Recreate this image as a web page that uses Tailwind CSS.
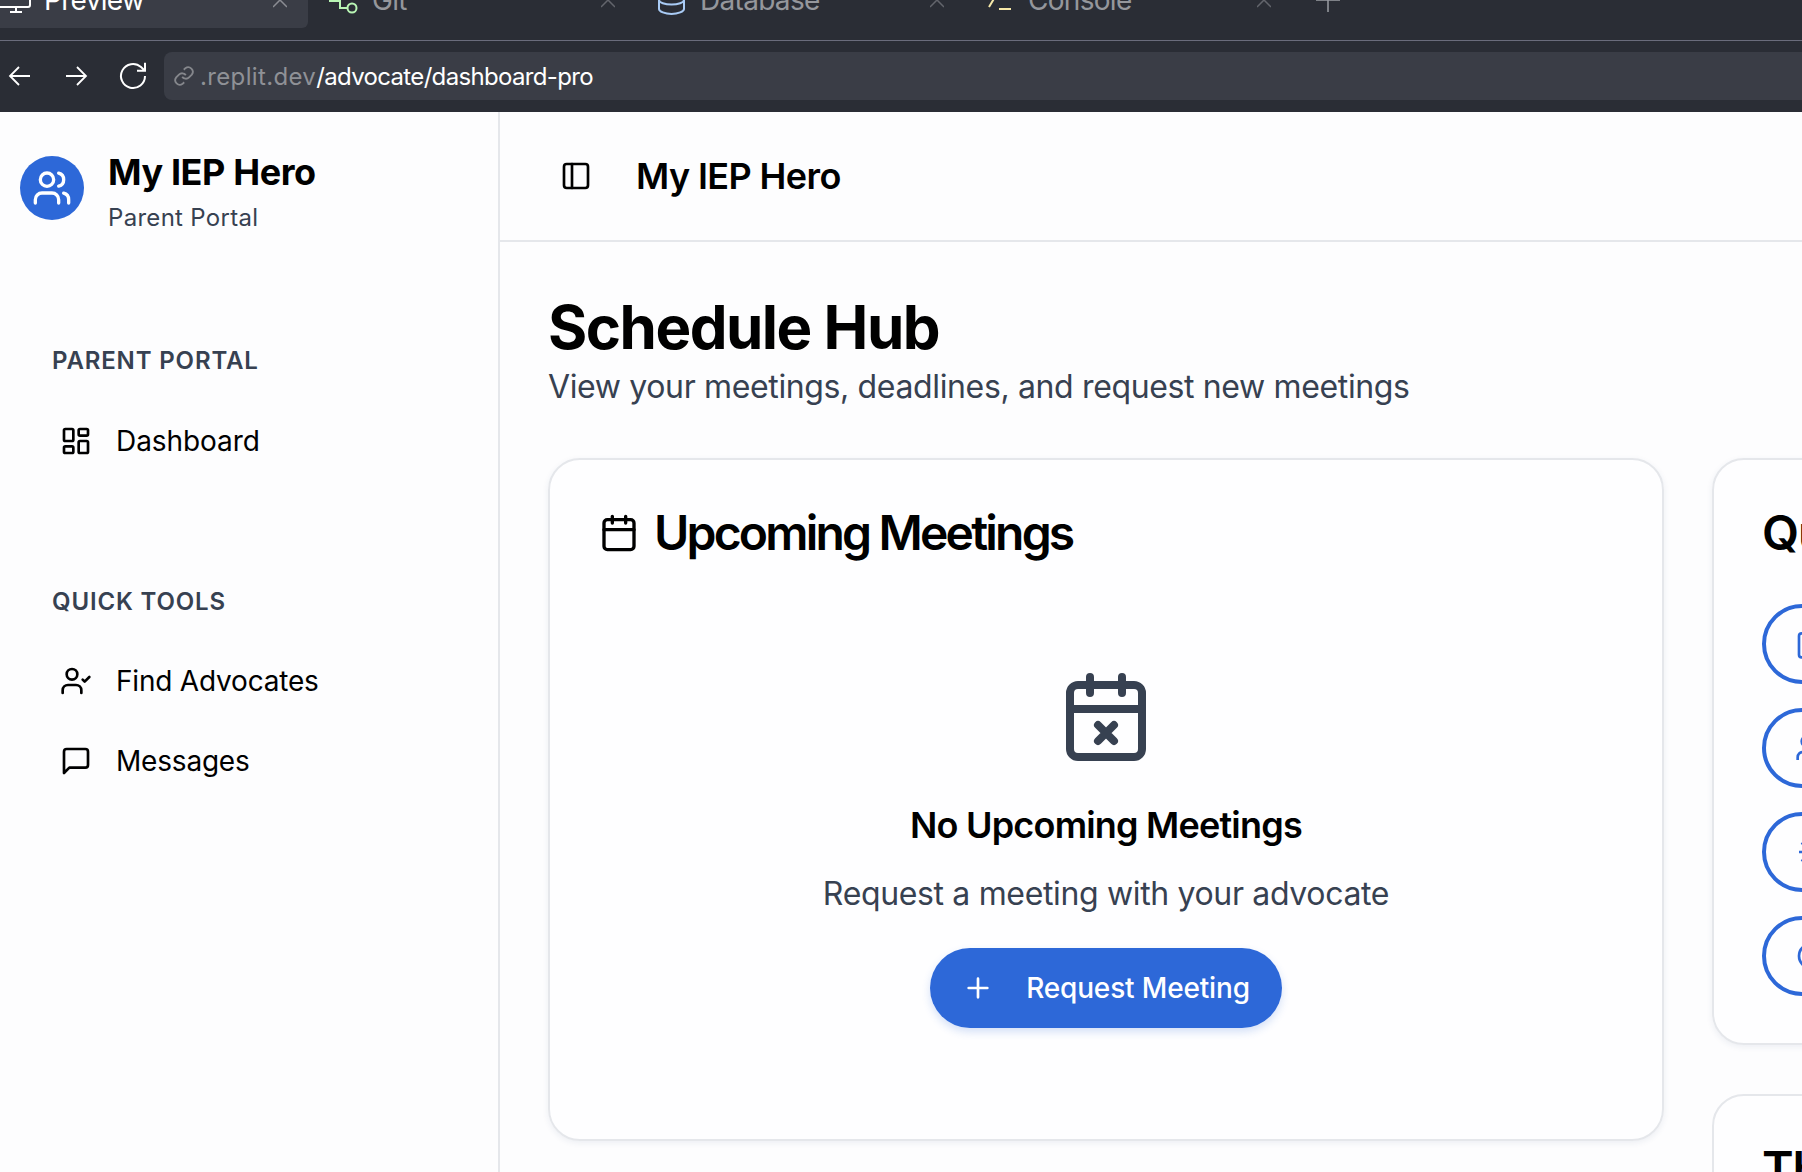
<!DOCTYPE html>
<html><head><meta charset="utf-8">
<script src="https://cdn.jsdelivr.net/npm/@tailwindcss/browser@4"></script>
<title>Schedule Hub</title></head>
<body class="m-0 h-[1172px] w-[1802px] overflow-hidden bg-[#fdfdfe] font-['Inter',sans-serif] text-black">
<div class="flex h-[112px] flex-col overflow-hidden bg-[#2a2d35]">
  <div class="h-[41px] shrink-0 border-b border-[#6a6c7c]">
    <div class="mt-[-16px] flex h-[44px] items-start text-[28px] leading-[32px] tracking-[-0.7px] text-[#95979c]">
      <div class="flex h-full w-[308px] items-start rounded-br-[6px] bg-[#3a3d46] text-white">
        <svg class="h-[32px] w-[44px] shrink-0 overflow-visible" viewBox="0 0 44 32" fill="none" stroke="#fff" stroke-width="2"><rect x="-8" y="4" width="38" height="19" rx="2"/><path d="M16 23v5M10 28h12"/></svg>
        <span>Preview</span>
        <svg class="ml-auto mr-[21px] mt-[6px] h-[20px] w-[14px]" viewBox="0 0 14 20" fill="none" stroke="#8a8c92" stroke-width="1.5"><path d="M0 3l14 14M14 3 0 17"/></svg>
      </div>
      <div class="flex h-full w-[329px] items-start pl-[21px]">
        <svg class="h-[32px] w-[43px] shrink-0" viewBox="0 0 43 32" fill="none" stroke="#b8f5b4" stroke-width="2"><path d="M0 17h11v7h7"/><circle cx="23" cy="24" r="4.500"/></svg>
        <span>Git</span>
        <svg class="ml-auto mr-[22px] mt-[6px] h-[20px] w-[14px]" viewBox="0 0 14 20" fill="none" stroke="#63656c" stroke-width="1.5"><path d="M0 17 14 3M0 3l14 14"/></svg>
      </div>
      <div class="flex h-full w-[329px] items-start pl-[21px]">
        <svg class="h-[32px] w-[42px] shrink-0" viewBox="0 0 42 32" fill="none" stroke="#a9cbf5" stroke-width="2"><path d="M1 4v21c0 2.500 6 5 12.500 5S26 27.500 26 25V4"/><path d="M1 16c0 2.500 6 4.500 12.500 4.500S26 18.500 26 16"/></svg>
        <span>Database</span>
        <svg class="ml-auto mr-[22px] mt-[6px] h-[20px] w-[14px]" viewBox="0 0 14 20" fill="none" stroke="#63656c" stroke-width="1.5"><path d="M0 17 14 3M0 3l14 14"/></svg>
      </div>
      <div class="flex h-full w-[329px] items-start pl-[21px]">
        <svg class="h-[32px] w-[41px] shrink-0" viewBox="0 0 41 32" fill="none" stroke="#f6e8a8" stroke-width="2"><path d="M2 23 8 13M12 25h12"/></svg>
        <span>Console</span>
        <svg class="ml-auto mr-[24px] mt-[6px] h-[20px] w-[14px]" viewBox="0 0 14 20" fill="none" stroke="#63656c" stroke-width="1.5"><path d="M0 17 14 3M0 3l14 14"/></svg>
      </div>
      <svg class="ml-[21px] mt-[4px] h-[24px] w-[24px]" viewBox="0 0 24 24" fill="none" stroke="#9b9da3" stroke-width="1.500"><path d="M0 12h24M12 0v24"/></svg>
    </div>
  </div>
  <div class="flex h-[71px] items-center pl-[8px] pb-[1px]">
    <svg class="h-[24px] w-[24px] shrink-0" viewBox="0 0 24 24" fill="none" stroke="#fff" stroke-width="1.8"><path d="M22 12H2M11 3l-9 9 9 9"/></svg>
    <svg class="ml-[32px] h-[24px] w-[24px] shrink-0" viewBox="0 0 24 24" fill="none" stroke="#fff" stroke-width="1.8"><path d="M2 12h20M13 3l9 9-9 9"/></svg>
    <svg class="ml-[29px] h-[32px] w-[32px] shrink-0" viewBox="0 0 24 24" fill="none" stroke="#fff" stroke-width="1.5"><path d="M21 12a9 9 0 1 1-3-6.700L21 8M21 2v6h-6"/></svg>
    <div class="ml-[15px] flex h-[48px] flex-1 items-center rounded-l-[8px] bg-[#3a3d46] pl-[9px] pt-[2px] text-[24px] text-white">
      <svg class="mb-[2px] h-[22px] w-[22px]" viewBox="0 0 24 24" fill="none" stroke="#85878c" stroke-width="2"><path d="M10 13a5 5 0 0 0 7.500.500l3-3a5 5 0 0 0-7-7l-1.700 1.700"/><path d="M14 11a5 5 0 0 0-7.500-.500l-3 3a5 5 0 0 0 7 7l1.700-1.700"/></svg>
      <span class="ml-[5px] tracking-[0.35px] text-[#8f9196]">.replit.dev</span><span class="tracking-[-0.66px]">/advocate/dashboard-pro</span>
    </div>
  </div>
</div>
<div class="flex h-[1060px]">
  <aside class="w-[500px] shrink-0 border-r-2 border-[#e5e7eb]">
    <div class="flex items-start gap-[24px] pl-[20px] pt-[36px]">
      <div class="mt-[8px] flex h-[64px] w-[64px] items-center justify-center rounded-full bg-[#2d68d8]">
        <svg class="h-[40px] w-[40px]" viewBox="0 0 24 24" fill="none" stroke="#fff" stroke-width="2" stroke-linecap="round" stroke-linejoin="round"><path d="M16 21v-2a4 4 0 0 0-4-4H6a4 4 0 0 0-4 4v2"/><circle cx="9" cy="7" r="4"/><path d="M22 21v-2a4 4 0 0 0-3-3.870M16 3.130a4 4 0 0 1 0 7.750"/></svg>
      </div>
      <div>
        <div class="text-[36px] font-bold leading-[48px] tracking-[-0.4px]">My IEP Hero</div>
        <div class="mt-[6px] text-[24px] leading-[32px] tracking-[0.3px] text-[#374151]">Parent Portal</div>
      </div>
    </div>
    <div class="pl-[52px] pt-[111px] text-[24px] font-semibold leading-[32px] tracking-[0.85px] text-[#374151]">PARENT PORTAL</div>
    <div class="flex items-center gap-[24px] pl-[60px] pt-[44px] text-[28px] leading-[40px] tracking-[-0.08px]">
      <svg class="h-[32px] w-[32px]" viewBox="0 0 24 24" fill="none" stroke="currentColor" stroke-width="2" stroke-linecap="round" stroke-linejoin="round"><rect width="7" height="9" x="3" y="3" rx="1"/><rect width="7" height="5" x="14" y="3" rx="1"/><rect width="7" height="9" x="14" y="12" rx="1"/><rect width="7" height="5" x="3" y="16" rx="1"/></svg>
      <span>Dashboard</span>
    </div>
    <div class="pl-[52px] pt-[125px] text-[24px] font-semibold leading-[32px] tracking-[0.85px] text-[#374151]">QUICK TOOLS</div>
    <div class="flex items-center gap-[24px] pl-[60px] pt-[43px] text-[28px] leading-[40px] tracking-[-0.2px]">
      <svg class="h-[32px] w-[32px]" viewBox="0 0 24 24" fill="none" stroke="currentColor" stroke-width="2" stroke-linecap="round" stroke-linejoin="round"><path d="M16 21v-2a4 4 0 0 0-4-4H6a4 4 0 0 0-4 4v2"/><circle cx="9" cy="7" r="4"/><path d="m17 11 1.500 1.500L22 9"/></svg>
      <span>Find Advocates</span>
    </div>
    <div class="flex items-center gap-[24px] pl-[60px] pt-[40px] text-[28px] leading-[40px] tracking-[-0.2px]">
      <svg class="h-[32px] w-[32px]" viewBox="0 0 24 24" fill="none" stroke="currentColor" stroke-width="2" stroke-linecap="round" stroke-linejoin="round"><path d="M21 15a2 2 0 0 1-2 2H7l-4 4V5a2 2 0 0 1 2-2h14a2 2 0 0 1 2 2z"/></svg>
      <span>Messages</span>
    </div>
  </aside>
  <main class="min-w-0 flex-1 overflow-hidden">
    <header class="flex h-[130px] items-center border-b-2 border-[#e5e7eb] pl-[60px]">
      <svg class="h-[32px] w-[32px]" viewBox="0 0 24 24" fill="none" stroke="currentColor" stroke-width="2" stroke-linecap="round" stroke-linejoin="round"><rect width="18" height="18" x="3" y="3" rx="2"/><path d="M9 3v18"/></svg>
      <span class="ml-[44px] text-[36px] font-semibold tracking-[-0.6px]">My IEP Hero</span>
    </header>
    <div class="pl-[48px] pt-[49px]">
      <h1 class="text-[60px] font-bold leading-[72px] tracking-[-1.5px]">Schedule Hub</h1>
      <p class="text-[32px] leading-[48px] tracking-[-0.36px] text-[#374151]">View your meetings, deadlines, and request new meetings</p>
      <div class="mt-[47px] flex items-start gap-[48px]">
        <section class="h-[683px] w-[1116px] shrink-0 rounded-[32px] border-2 border-[#e5e7eb] bg-white/60 pl-[49px] pt-[49px] shadow-[0_2px_6px_rgba(40,60,120,0.08)]">
          <h2 class="flex items-center gap-[15px] text-[48px] font-semibold leading-[48px] tracking-[-2.8px]">
            <svg class="h-[40px] w-[40px]" viewBox="0 0 24 24" fill="none" stroke="currentColor" stroke-width="2" stroke-linecap="round" stroke-linejoin="round"><path d="M8 2v4M16 2v4"/><rect width="18" height="18" x="3" y="4" rx="2"/><path d="M3 10h18"/></svg>
            Upcoming Meetings
          </h2>
          <div class="mr-[49px] flex flex-col items-center pt-[112px]">
            <svg class="h-[96px] w-[96px]" viewBox="0 0 24 24" fill="none" stroke="#374151" stroke-width="2" stroke-linecap="round" stroke-linejoin="round"><path d="M8 2v4M16 2v4"/><rect width="18" height="18" x="3" y="4" rx="2"/><path d="M3 10h18M10 14l4 4M14 14l-4 4"/></svg>
            <h3 class="mt-[32px] text-[36px] font-semibold leading-[56px] tracking-[-0.8px]">No Upcoming Meetings</h3>
            <p class="mt-[17px] text-[32px] leading-[48px] tracking-[-0.35px] text-[#374151]">Request a meeting with your advocate</p>
            <button class="mt-[30px] flex h-[80px] items-center gap-[32px] rounded-full bg-[#2d68d8] px-[32px] text-[28px] font-medium tracking-[-0.16px] text-white shadow-[0_4px_8px_rgba(45,104,216,0.2)]">
              <svg class="h-[32px] w-[32px]" viewBox="0 0 24 24" fill="none" stroke="#fff" stroke-width="2" stroke-linecap="round"><path d="M5 12h14M12 5v14"/></svg>
              Request Meeting
            </button>
          </div>
        </section>
        <div class="flex w-[700px] shrink-0 flex-col gap-[49px]">
          <section class="h-[587px] rounded-[32px] border-2 border-[#e5e7eb] bg-white/60 pl-[48px] pt-[49px] shadow-[0_2px_6px_rgba(40,60,120,0.08)]">
            <h2 class="text-[48px] font-semibold leading-[48px] tracking-[-1.2px]">Quick Actions</h2>
            <div class="mt-[47px] flex flex-col gap-[24px]">
              <div class="flex h-[80px] w-[400px] items-center rounded-full border-[4px] border-[#2d68d8] pl-[29px]">
                <svg class="h-[32px] w-[32px]" viewBox="0 0 24 24" fill="none" stroke="#2d68d8" stroke-width="2"><rect width="18" height="18" x="3" y="4" rx="2"/></svg>
              </div>
              <div class="flex h-[80px] w-[400px] items-center rounded-full border-[4px] border-[#2d68d8] pl-[29px]">
                <svg class="h-[32px] w-[32px]" viewBox="0 0 24 24" fill="none" stroke="#2d68d8" stroke-width="2"><path d="M2 21v-2a4 4 0 0 1 4-4h6"/><circle cx="9" cy="7" r="4"/></svg>
              </div>
              <div class="flex h-[80px] w-[400px] items-center rounded-full border-[4px] border-[#2d68d8] pl-[29px]">
                <svg class="h-[32px] w-[32px]" viewBox="0 0 24 24" fill="none" stroke="#2d68d8" stroke-width="2"><path d="M5 5l2 2M3 12h4M5 19l2-2"/></svg>
              </div>
              <div class="flex h-[80px] w-[400px] items-center rounded-full border-[4px] border-[#2d68d8] pl-[29px]">
                <svg class="h-[32px] w-[32px]" viewBox="0 0 24 24" fill="none" stroke="#2d68d8" stroke-width="2"><circle cx="12" cy="12" r="9"/></svg>
              </div>
            </div>
          </section>
          <section class="h-[300px] rounded-[32px] border-2 border-[#e5e7eb] bg-white/60 pl-[48px] pt-[49px]">
            <h2 class="text-[48px] font-semibold leading-[48px] tracking-[-1.2px]">This Week</h2>
          </section>
        </div>
      </div>
    </div>
  </main>
</div>
</body></html>
